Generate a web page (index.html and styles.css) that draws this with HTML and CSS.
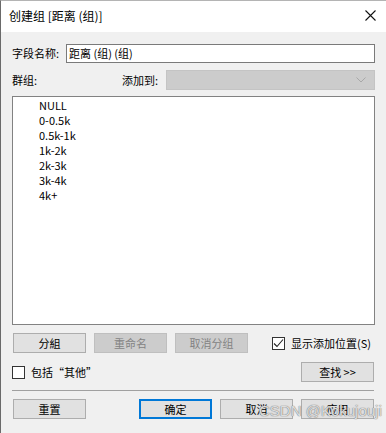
FILE: index.html
```html
<!DOCTYPE html>
<html lang="zh-CN">
<head>
    <meta charset="UTF-8">
    <title>创建组</title>
    <link rel="stylesheet" href="styles.css">
</head>
<body>
    <div class="dialog">
        <header class="titlebar">
            <span class="title">创建组 [距离 (组)]</span>
            <svg class="close" width="11" height="11" viewBox="0 0 11 11">
                <path d="M0.5 0.5 L10.5 10.5 M10.5 0.5 L0.5 10.5" stroke="#111" stroke-width="1.1" fill="none"/>
            </svg>
        </header>
        <main class="content">
            <div class="row field-row">
                <label class="label">字段名称:</label>
                <div class="input">距离 (组) (组)</div>
            </div>
            <div class="row group-row">
                <span class="label">群组:</span>
                <span class="label add-to">添加到:</span>
                <div class="select">
                    <svg width="10" height="6" viewBox="0 0 10 6">
                        <path d="M0.5 0.5 L5 5 L9.5 0.5" stroke="#a8a8a8" fill="none"/>
                    </svg>
                </div>
            </div>
            <ul class="list">
                <li>NULL</li>
                <li>0-0.5k</li>
                <li>0.5k-1k</li>
                <li>1k-2k</li>
                <li>2k-3k</li>
                <li>3k-4k</li>
                <li>4k+</li>
            </ul>
            <div class="row action-row">
                <button class="btn">分組</button>
                <button class="btn disabled">重命名</button>
                <button class="btn disabled">取消分组</button>
                <label class="check show-pos">
                    <span class="box">
                        <svg width="11" height="11" viewBox="0 0 11 11">
                            <path d="M1 5.5 L4 8.5 L10 1.5" stroke="#222" stroke-width="1.1" fill="none"/>
                        </svg>
                    </span>
                    显示添加位置(S)
                </label>
            </div>
            <div class="row other-row">
                <label class="check">
                    <span class="box"></span>
                    包括“其他”
                </label>
                <button class="btn find">查找 &gt;&gt;</button>
            </div>
            <hr class="sep">
            <div class="row bottom-row">
                <button class="btn">重置</button>
                <div class="right-btns">
                    <button class="btn primary">确定</button>
                    <button class="btn">取消</button>
                    <button class="btn">应用</button>
                </div>
            </div>
        </main>
        <div class="watermark">CSDN @Kokujouji</div>
    </div>
</body>
</html>
```

FILE: styles.css
```css
body {
    margin: 0;
    background: #f0f0f0;
    font-family: "Noto Sans CJK SC", "Liberation Sans", sans-serif;
    font-size: 11px;
    color: #000;
    white-space: nowrap;
}
.dialog {
    position: relative;
    width: 386px;
    height: 433px;
    box-sizing: border-box;
    border-top: 1px solid #b4b4b4;
    border-left: 1px solid #6a6a6a;
    background: #f0f0f0;
    overflow: hidden;
}
.titlebar {
    height: 31px;
    background: #fff;
    display: flex;
    align-items: center;
    justify-content: space-between;
    padding: 0 10px 0 8px;
}
.title {
    font-size: 12px;
    margin-top: -2px;
}
.close {
    margin-top: -2px;
}
.content {
    padding: 12px 11px 0 11px;
}
.row {
    display: flex;
    align-items: center;
}
.label {
    line-height: 19px;
}
.field-row {
    height: 19px;
}
.input {
    flex: 1;
    height: 19px;
    box-sizing: border-box;
    border: 1px solid #7a7a7a;
    background: #fff;
    line-height: 17px;
    padding-left: 2px;
}
.field-row .label {
    width: 54px;
}
.group-row {
    margin-top: 7px;
    height: 20px;
}
.add-to {
    margin-left: 85px;
    width: 44px;
}
.select {
    flex: 1;
    height: 20px;
    box-sizing: border-box;
    background: #cccccc;
    border: 1px solid #c4c4c4;
    display: flex;
    align-items: center;
    justify-content: flex-end;
    padding-right: 8px;
}
.list {
    list-style: none;
    margin: 6px 0 0 0;
    height: 229px;
    box-sizing: border-box;
    background: #fff;
    border: 1px solid #828282;
    padding: 1px 0 0 26px;
}
.list li {
    line-height: 15px;
    height: 15px;
}
.btn {
    width: 73px;
    height: 20px;
    box-sizing: border-box;
    background: #e1e1e1;
    border: 1px solid #adadad;
    font-family: inherit;
    font-size: 11px;
    color: #000;
    padding: 0;
    line-height: 18px;
}
.btn.disabled {
    background: #cccccc;
    border-color: #bfbfbf;
    color: #838383;
}
.btn.primary {
    border: 2px solid #0078d7;
    line-height: 16px;
}
.action-row {
    margin-top: 8px;
    padding-left: 1px;
    gap: 8px;
}
.check {
    display: flex;
    align-items: center;
    gap: 6px;
}
.box {
    width: 13px;
    height: 13px;
    box-sizing: border-box;
    border: 1px solid #333;
    background: #fff;
    display: flex;
    align-items: center;
    justify-content: center;
}
.show-pos {
    margin-left: 16px;
}
.other-row {
    margin-top: 9px;
    justify-content: space-between;
    padding-right: 1px;
}
.sep {
    margin: 8px 1px 0 0;
    border: 0;
    border-top: 1px solid #a0a0a0;
}
.bottom-row {
    margin-top: 8px;
    padding-left: 1px;
    padding-right: 1px;
    justify-content: space-between;
}
.right-btns {
    display: flex;
    gap: 8px;
}
.watermark {
    position: absolute;
    left: 258px;
    top: 401px;
    font-family: "Liberation Sans", sans-serif;
    font-size: 15px;
    color: rgba(255, 255, 255, 0.75);
    text-shadow: 0 0 1px #777, 0 0 1px #777;
}
```
